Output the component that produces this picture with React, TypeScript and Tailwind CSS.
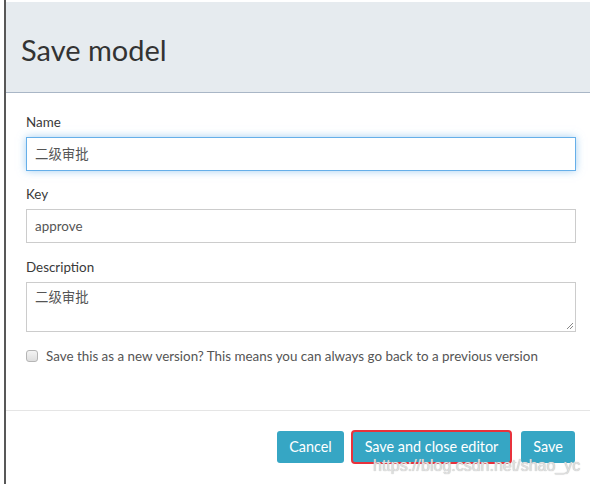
import React from "react";

export default function App() {
  const font = { fontFamily: "Lato, 'Noto Sans CJK SC', sans-serif" };
  return (
    <div className="relative w-[590px] h-[484px] bg-white overflow-hidden" style={font}>
      <div className="ml-[4px] h-[484px] border-l-2 border-[#585858] flex flex-col">
        <div className="mt-[2px] h-[91px] bg-[#e6ebef] border-b border-[#a9b6c6] flex items-center pl-[15px]">
          <h1 className="text-[29px] text-[#333] leading-none pt-[5px]">Save model</h1>
        </div>
        <div className="pt-[19px] pl-[20px] pr-[14px] flex flex-col">
          <label className="text-[13.4px] leading-[20px] text-[#3a3a3a]">Name</label>
          <div className="mt-[5px] h-[34px] border border-[#66afe9] shadow-[0_0_8px_rgba(102,175,233,0.6)] flex items-center pl-[8px] text-[13.4px] text-[#555]">
            二级审批
          </div>
          <label className="mt-[13px] text-[13.4px] leading-[20px] text-[#3a3a3a]">Key</label>
          <div className="mt-[5px] h-[34px] border border-[#cccccc] flex items-center pl-[8px] text-[13.4px] text-[#555]">
            approve
          </div>
          <label className="mt-[14px] text-[13.4px] leading-[20px] text-[#3a3a3a]">Description</label>
          <div className="relative mt-[5px] h-[50px] border border-[#cccccc] pl-[8px] pt-[4px] text-[13.4px] leading-[20px] text-[#555]">
            二级审批
            <svg className="absolute right-[1px] bottom-[1px]" width="8" height="8" viewBox="0 0 8 8">
              <line x1="1" y1="7" x2="7" y2="1" stroke="#888" strokeWidth="1" />
              <line x1="4" y1="7" x2="7" y2="4" stroke="#888" strokeWidth="1" />
            </svg>
          </div>
          <div className="mt-[14px] flex items-center">
            <span className="w-[12px] h-[12px] rounded-[3px] border border-[#b5b5b5] bg-gradient-to-b from-[#f4f4f4] to-[#dedede]" />
            <span className="ml-[8px] text-[13.4px] leading-[20px] text-[#555]">
              Save this as a new version? This means you can always go back to a previous version
            </span>
          </div>
        </div>
        <div className="mt-[44px] border-t border-[#e5e5e5] pt-[20px] pr-[15px] flex justify-end">
          <button className="w-[67px] h-[32px] rounded-[3px] bg-[#36a6c4] text-white text-[14.4px] leading-none">
            Cancel
          </button>
          <button className="ml-[8px] w-[159px] h-[32px] rounded-[3px] bg-[#36a6c4] text-white text-[14.4px] leading-none outline outline-2 outline-[#e8323c] -outline-offset-1">
            Save and close editor
          </button>
          <button className="ml-[10px] w-[54px] h-[32px] rounded-[3px] bg-[#36a6c4] text-white text-[14.4px] leading-none">
            Save
          </button>
        </div>
      </div>
      <div
        className="absolute left-[373px] top-[455px] text-[16px] leading-[22px] text-[#e0e0e0] pointer-events-none whitespace-nowrap"
        style={{ fontFamily: "'Liberation Sans', Arial, sans-serif", textShadow: "0 0 1px #a8a8a8" }}
      >
        https://blog.csdn.net/shao_yc
      </div>
    </div>
  );
}
